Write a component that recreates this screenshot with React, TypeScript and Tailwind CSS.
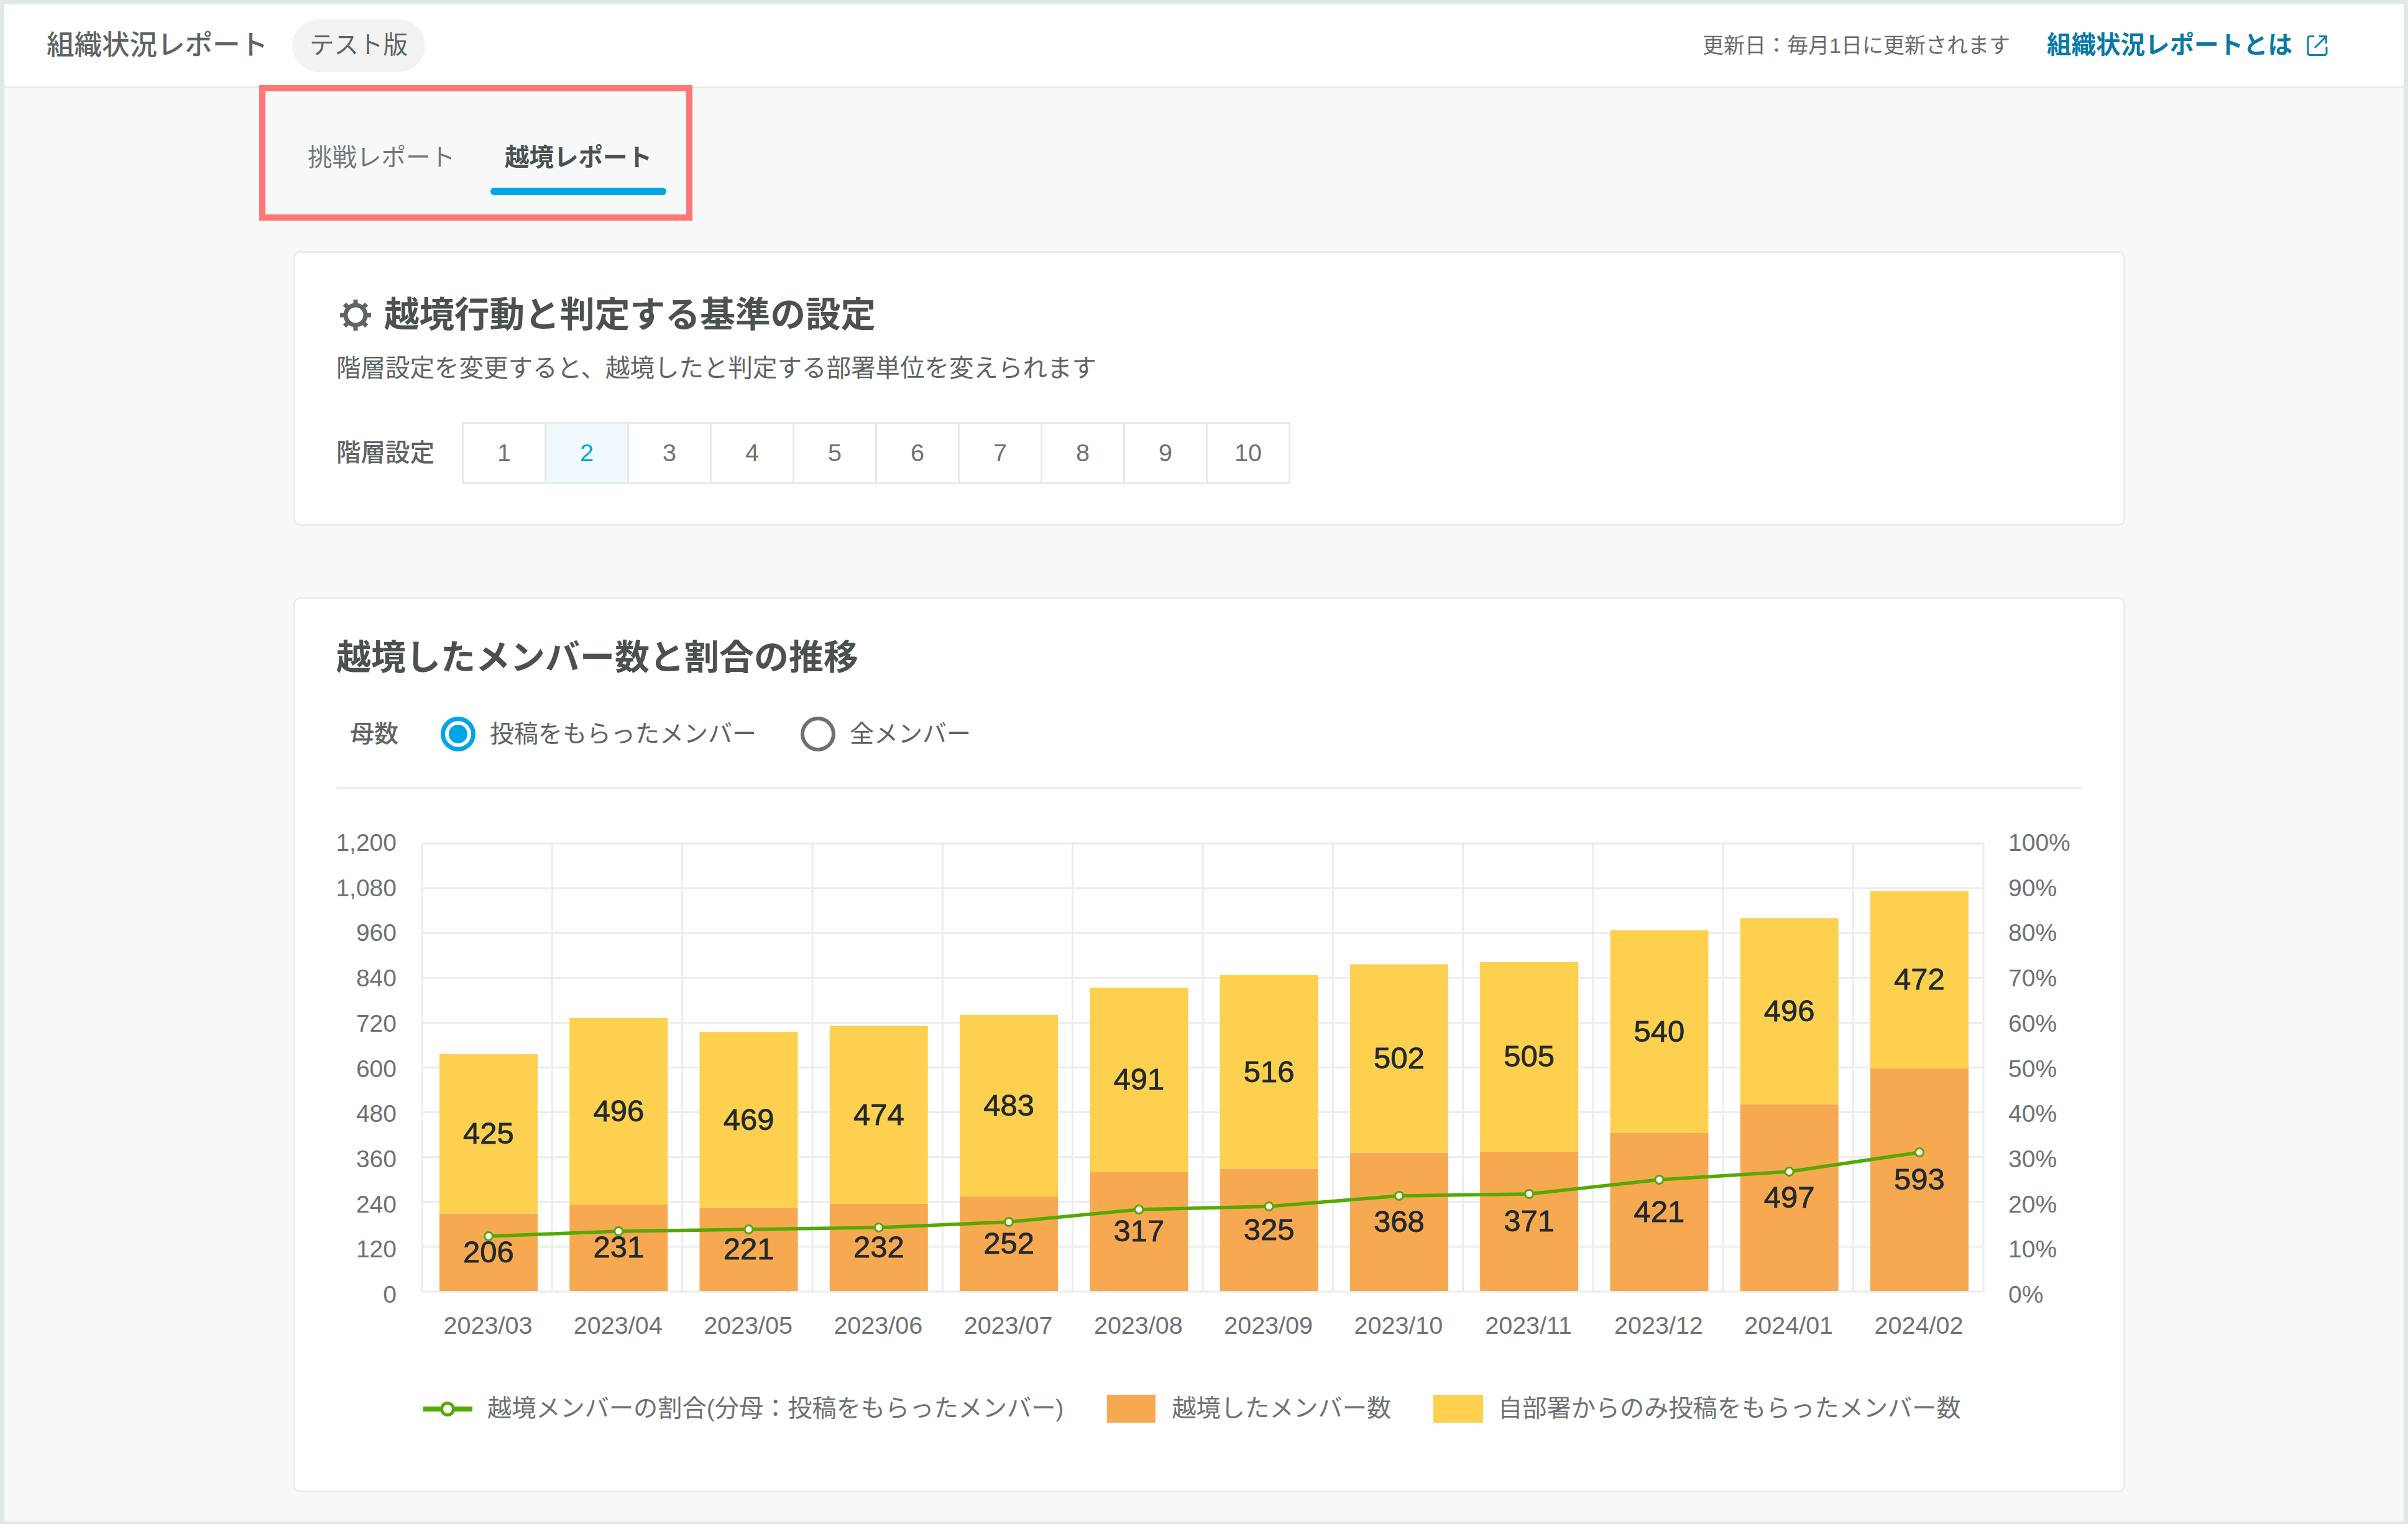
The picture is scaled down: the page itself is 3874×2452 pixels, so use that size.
const levels = [1, 2, 3, 4, 5, 6, 7, 8, 9, 10];

const months = [
  { label: "2023/03", crossed: 206, own: 425, lineY: 1990 },
  { label: "2023/04", crossed: 231, own: 496, lineY: 1982 },
  { label: "2023/05", crossed: 221, own: 469, lineY: 1979 },
  { label: "2023/06", crossed: 232, own: 474, lineY: 1976 },
  { label: "2023/07", crossed: 252, own: 483, lineY: 1967 },
  { label: "2023/08", crossed: 317, own: 491, lineY: 1947 },
  { label: "2023/09", crossed: 325, own: 516, lineY: 1942 },
  { label: "2023/10", crossed: 368, own: 502, lineY: 1925 },
  { label: "2023/11", crossed: 371, own: 505, lineY: 1922 },
  { label: "2023/12", crossed: 421, own: 540, lineY: 1899 },
  { label: "2024/01", crossed: 497, own: 496, lineY: 1886 },
  { label: "2024/02", crossed: 593, own: 472, lineY: 1855 },
];

const leftTicks = ["1,200", "1,080", "960", "840", "720", "600", "480", "360", "240", "120", "0"];
const rightTicks = ["100%", "90%", "80%", "70%", "60%", "50%", "40%", "30%", "20%", "10%", "0%"];

// chart svg uses page coordinates in its viewBox
const plot = { left: 679, right: 3191, top: 1358, bottom: 2079 };
const colWidth = (plot.right - plot.left) / 12;
const rowHeight = (plot.bottom - plot.top) / 10;
const tickStep = 72.7;
const barBottom = 2078;
const unit = 0.604;
const barWidth = 158;
const barCenter = (i: number) => 786 + i * 209.27;

function GearIcon() {
  const teeth = [0, 45, 90, 135, 180, 225, 270, 315];
  return (
    <svg viewBox="0 0 52 52" className="w-[52px] h-[52px] shrink-0">
      <circle cx="26" cy="26" r="16" fill="none" stroke="#5f6567" strokeWidth="7" />
      {teeth.map((deg) => (
        <line
          key={deg}
          x1="26"
          y1="9"
          x2="26"
          y2="1"
          stroke="#5f6567"
          strokeWidth="7"
          transform={`rotate(${deg} 26 26)`}
        />
      ))}
    </svg>
  );
}

function ExternalIcon() {
  return (
    <svg viewBox="0 0 34 34" fill="none" stroke="#0f80ae" strokeWidth="3" className="w-[34px] h-[34px]">
      <path d="M11 2.5H5a3 3 0 0 0-3 3v24a3 3 0 0 0 3 3h24a3 3 0 0 0 3-3v-9" strokeLinecap="round" />
      <path d="M13 21L31 3M20 2.5h11.5V14" />
    </svg>
  );
}

function Chart() {
  return (
    <svg viewBox="541 1270 2807 900" className="block w-[2807px] h-[900px]">
      {/* grid */}
      {leftTicks.map((_, i) => (
        <line
          key={i}
          x1={plot.left}
          x2={plot.right}
          y1={plot.top + i * rowHeight}
          y2={plot.top + i * rowHeight}
          stroke="#ececec"
          strokeWidth="3"
        />
      ))}
      {Array.from({ length: 13 }).map((_, i) => (
        <line
          key={i}
          x1={plot.left + i * colWidth}
          x2={plot.left + i * colWidth}
          y1={plot.top}
          y2={plot.bottom}
          stroke="#ececec"
          strokeWidth="3"
        />
      ))}

      {/* axis labels */}
      {leftTicks.map((t, i) => (
        <text key={t} x="638" y={plot.top + i * tickStep + 12} textAnchor="end" fontSize="39" fill="#6c7274">
          {t}
        </text>
      ))}
      {rightTicks.map((t, i) => (
        <text key={t} x="3231" y={plot.top + i * tickStep + 12} fontSize="39" fill="#6c7274">
          {t}
        </text>
      ))}

      {/* bars */}
      {months.map((m, i) => {
        const crossedH = m.crossed * unit;
        const ownH = m.own * unit;
        const x = barCenter(i) - barWidth / 2;
        return (
          <g key={m.label}>
            <rect x={x} y={barBottom - crossedH} width={barWidth} height={crossedH} fill="#f6a950" />
            <rect x={x} y={barBottom - crossedH - ownH} width={barWidth} height={ownH} fill="#fed050" />
          </g>
        );
      })}

      {/* ratio line */}
      <polyline
        points={months.map((m, i) => `${barCenter(i)},${m.lineY}`).join(" ")}
        fill="none"
        stroke="#56a805"
        strokeWidth="5.5"
      />
      {months.map((m, i) => (
        <circle key={m.label} cx={barCenter(i)} cy={m.lineY} r="6.5" fill="#fff" stroke="#56a805" strokeWidth="3" />
      ))}

      {/* bar labels */}
      {months.map((m, i) => {
        const crossedH = m.crossed * unit;
        const ownH = m.own * unit;
        return (
          <g key={m.label} fontSize="49" fill="#222a2e" stroke="#222a2e" strokeWidth="0.8" textAnchor="middle">
            <text x={barCenter(i)} y={barBottom - crossedH / 2 + 16}>
              {m.crossed}
            </text>
            <text x={barCenter(i)} y={barBottom - crossedH - ownH / 2 + 16}>
              {m.own}
            </text>
          </g>
        );
      })}

      {/* x labels */}
      {months.map((m, i) => (
        <text key={m.label} x={barCenter(i) - 1} y="2147" textAnchor="middle" fontSize="39.5" fill="#6c7274">
          {m.label}
        </text>
      ))}
    </svg>
  );
}

export default function App() {
  return (
    <div className="relative w-[3874px] h-[2452px] overflow-hidden bg-[#e2e7e7] pt-[7px] px-[7px] pb-[4px] font-['Liberation_Sans','Noto_Sans_CJK_JP',sans-serif]">
      <div className="relative h-full bg-[#f7f9f8]">
        {/* Header */}
        <header className="h-[135px] bg-white border-b-[3px] border-[#e9ebeb] flex items-center justify-between pl-[68px] pr-[122px]">
          <div className="flex items-center">
            <span className="text-[44.5px] font-medium text-[#5e6464] leading-none">組織状況レポート</span>
            <span className="ml-[39px] w-[214px] h-[85px] rounded-full bg-[#f3f3f3] flex items-center justify-center text-[39.5px] text-[#5e6464]">
              テスト版
            </span>
          </div>
          <div className="flex items-center">
            <span className="text-[34px] text-[#666b6d]">更新日：毎月1日に更新されます</span>
            <a className="ml-[59px] text-[39.5px] font-bold text-[#0878a8]">組織状況レポートとは</a>
            <span className="ml-[23px] flex">
              <ExternalIcon />
            </span>
          </div>
        </header>

        <main className="ml-[465px] w-[2947px]">
          {/* Tabs */}
          <div className="flex pt-[83px] mb-[90px]">
            <div className="w-[283px] flex flex-col items-center">
              <span className="text-[39.5px] leading-[56px] text-[#73797a]">挑戦レポート</span>
            </div>
            <div className="ml-[34px] w-[283px] flex flex-col items-center">
              <span className="text-[39.5px] leading-[56px] font-bold text-[#4b5151]">越境レポート</span>
              <span className="mt-[21px] w-full h-[12px] rounded-full bg-[#00a5e8]" />
            </div>
          </div>

          {/* Level setting card */}
          <section className="bg-white border-[3px] border-[#eceeee] rounded-[10px] px-[66px] pt-[65px] pb-[64px]">
            <div className="flex items-center gap-[20px] pl-[5px]">
              <GearIcon />
              <h2 className="text-[56.5px] leading-[70px] font-bold text-[#4b5151]">越境行動と判定する基準の設定</h2>
            </div>
            <p className="mt-[22px] text-[39.5px] leading-[56px] text-[#5e6464]">
              階層設定を変更すると、越境したと判定する部署単位を変えられます
            </p>
            <div className="mt-[59px] flex items-center">
              <span className="w-[202px] text-[39.5px] font-medium text-[#5e6464]">階層設定</span>
              <div className="flex border-[3px] border-[#e8eaea]">
                {levels.map((n) => (
                  <div
                    key={n}
                    className={
                      n === 2
                        ? "w-[133px] h-[94px] flex items-center justify-center border-l-[3px] border-[#e8eaea] bg-[#eef8fd] text-[39.5px] text-[#00a5e8]"
                        : n === 1
                          ? "w-[130px] h-[94px] flex items-center justify-center text-[39.5px] text-[#6c7274]"
                          : "w-[133px] h-[94px] flex items-center justify-center border-l-[3px] border-[#e8eaea] text-[39.5px] text-[#6c7274]"
                    }
                  >
                    {n}
                  </div>
                ))}
              </div>
            </div>
          </section>

          {/* Trend card */}
          <section className="mt-[115px] bg-white border-[3px] border-[#eceeee] rounded-[10px] px-[66px] pt-[59px] pb-[109px]">
            <h2 className="text-[56px] leading-[70px] font-bold text-[#4b5151]">越境したメンバー数と割合の推移</h2>

            <div className="mt-[60px] flex items-center h-[56px] pl-[22px] text-[39px]">
              <span className="font-medium text-[#5e6464]">母数</span>
              <span className="ml-[68px] w-[56px] h-[56px] rounded-full border-[7px] border-[#00a5e8] flex items-center justify-center">
                <span className="w-[30px] h-[30px] rounded-full bg-[#00a5e8]" />
              </span>
              <span className="ml-[23px] text-[#5e6464]">投稿をもらったメンバー</span>
              <span className="ml-[71px] w-[56px] h-[56px] rounded-full border-[6px] border-[#6c7070]" />
              <span className="ml-[23px] text-[#5e6464]">全メンバー</span>
            </div>

            <div className="mt-[57px] h-[3px] bg-[#eceeee]" />

            <Chart />

            <div className="mt-[75px] ml-[140px] h-[45px] flex items-center text-[39.2px] text-[#6c7274]">
              <svg viewBox="0 0 79 26" className="w-[79px] h-[26px] mr-[24px]">
                <line x1="0" y1="13" x2="79" y2="13" stroke="#56a805" strokeWidth="8" />
                <circle cx="39" cy="13" r="9.5" fill="#fff" stroke="#56a805" strokeWidth="5" />
              </svg>
              <span>越境メンバーの割合(分母：投稿をもらったメンバー)</span>
              <span className="ml-[70px] w-[78px] h-[45px] bg-[#f6a950]" />
              <span className="ml-[26px]">越境したメンバー数</span>
              <span className="ml-[68px] w-[80px] h-[45px] bg-[#fed050]" />
              <span className="ml-[24px]">自部署からのみ投稿をもらったメンバー数</span>
            </div>
          </section>
        </main>

        {/* annotation frame over the tabs */}
        <div className="absolute left-[410px] top-[130px] w-[697px] h-[218px] border-[10px] border-[#ff7676]" />
      </div>
    </div>
  );
}
